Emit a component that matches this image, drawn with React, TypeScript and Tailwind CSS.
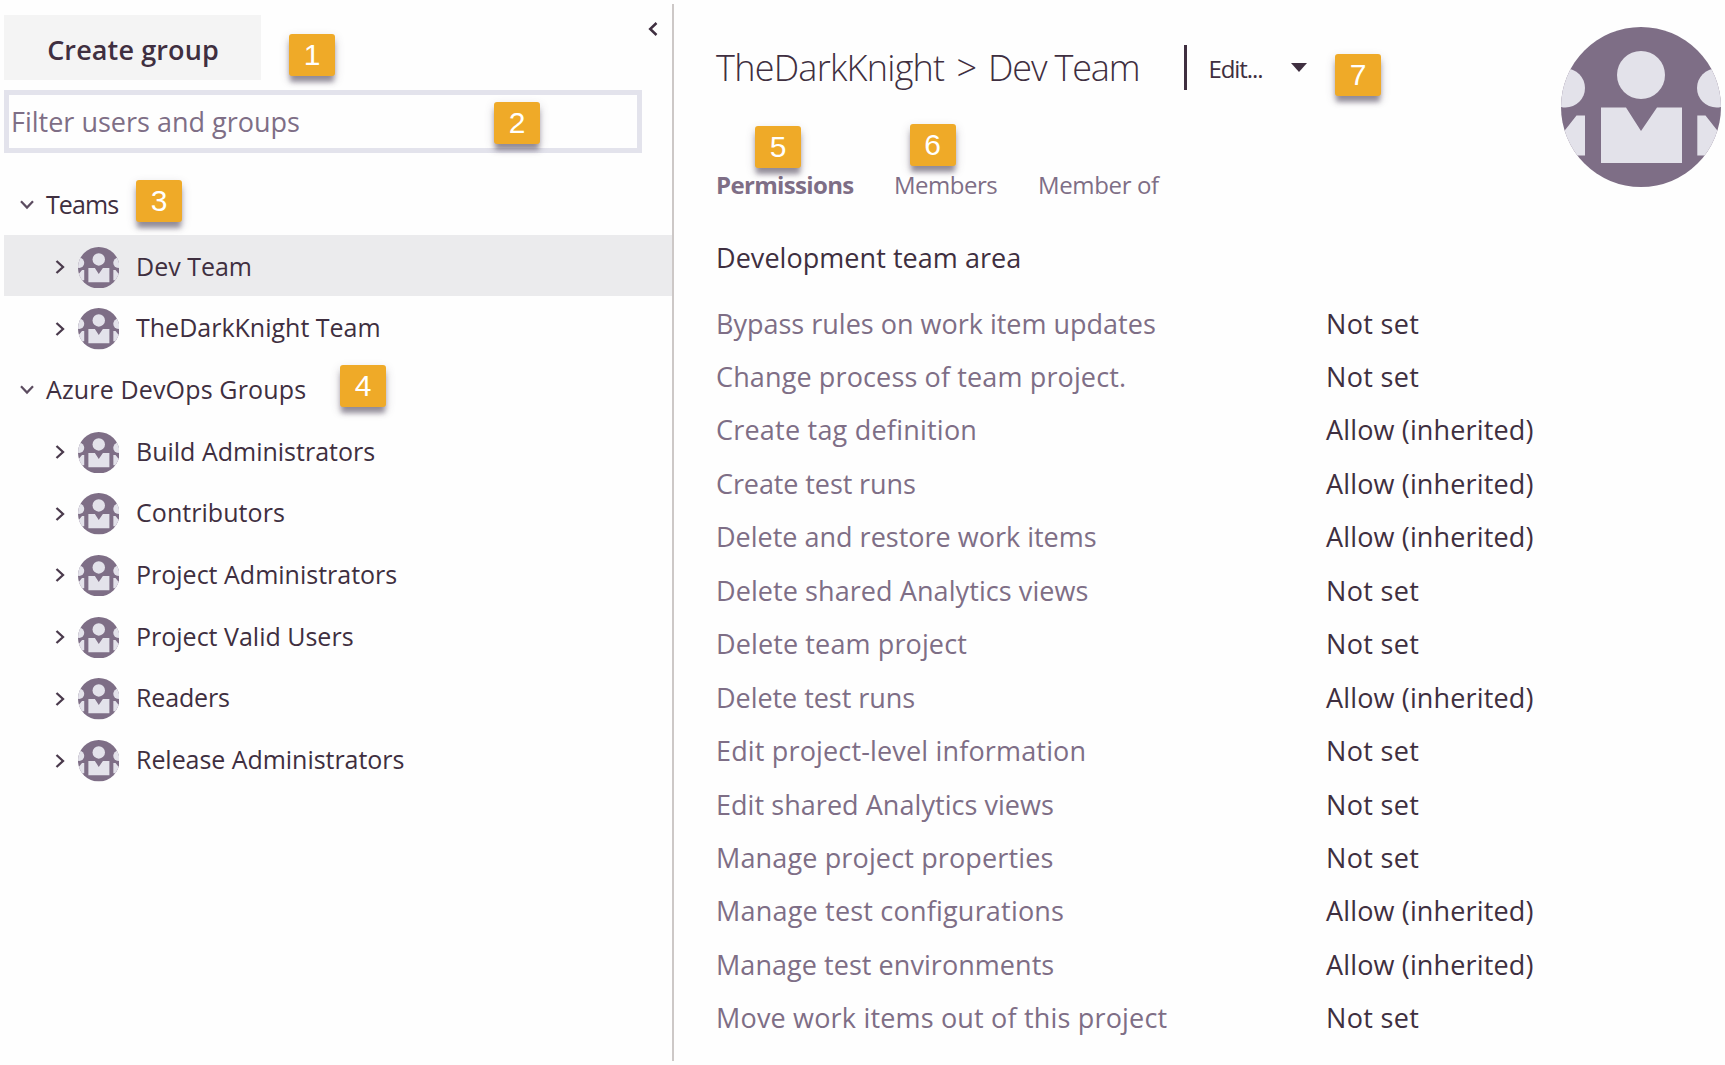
import React from "react";

const teams = [
  { name: "Dev Team", tracking: "", selected: true },
  { name: "TheDarkKnight Team", tracking: "", selected: false },
];

const groups = [
  { name: "Build Administrators", tracking: "" },
  { name: "Contributors", tracking: "tracking-[0.05px]" },
  { name: "Project Administrators", tracking: "" },
  { name: "Project Valid Users", tracking: "" },
  { name: "Readers", tracking: "tracking-[-0.15px]" },
  { name: "Release Administrators", tracking: "tracking-[-0.05px]" },
];

const permissions = [
  { name: "Bypass rules on work item updates", tracking: "", allow: false },
  { name: "Change process of team project.", tracking: "tracking-[0.13px]", allow: false },
  { name: "Create tag definition", tracking: "tracking-[0.22px]", allow: true },
  { name: "Create test runs", tracking: "tracking-[-0.1px]", allow: true },
  { name: "Delete and restore work items", tracking: "", allow: true },
  { name: "Delete shared Analytics views", tracking: "tracking-[0.08px]", allow: false },
  { name: "Delete team project", tracking: "tracking-[0.12px]", allow: false },
  { name: "Delete test runs", tracking: "tracking-[-0.05px]", allow: true },
  { name: "Edit project-level information", tracking: "tracking-[0.16px]", allow: false },
  { name: "Edit shared Analytics views", tracking: "tracking-[0.05px]", allow: false },
  { name: "Manage project properties", tracking: "tracking-[0.14px]", allow: false },
  { name: "Manage test configurations", tracking: "tracking-[0.2px]", allow: true },
  { name: "Manage test environments", tracking: "tracking-[0.05px]", allow: true },
  { name: "Move work items out of this project", tracking: "tracking-[0.18px]", allow: false },
];

function Avatar({ id, className }: { id: string; className: string }) {
  return (
    <svg viewBox="0 0 160 160" className={className} aria-hidden="true">
      <clipPath id={id}>
        <circle cx="80" cy="80" r="80" />
      </clipPath>
      <g clipPath={`url(#${id})`}>
        <rect width="160" height="160" fill="#7e6e86" />
        <g fill="#e3e2ea">
          <circle cx="80" cy="48" r="24" />
          <path d="M40 80.5H65L80 104L96 80.5H121V136H40Z" />
          <circle cx="4.5" cy="61" r="19.5" />
          <circle cx="155.5" cy="61" r="19.5" />
          <path d="M24 88.5H15.5L4.5 102.5L0 106V128.5H24Z" />
          <path d="M136.3 88.5H144.5L155.5 102.5L160 106V128.5H136.3Z" />
        </g>
      </g>
    </svg>
  );
}

function Badge({ n, className }: { n: number; className: string }) {
  return (
    <span
      className={`absolute flex h-[42px] w-[46px] items-center justify-center rounded-[3px] bg-[#efaa28] font-['Liberation_Sans',sans-serif] text-[30px] leading-none text-white shadow-[0_7px_5px_-1px_rgba(80,70,90,0.5),0_4px_10px_rgba(80,70,90,0.28)] ${className}`}
    >
      {n}
    </span>
  );
}

function SectionRow({ name, tracking }: { name: string; tracking: string }) {
  return (
    <div className="flex h-[61.7px] items-center">
      <svg viewBox="0 0 14 10" className="ml-4 mr-[12px] mt-[3px] h-[10px] w-[14px]" fill="none" stroke="#5c4c60" strokeWidth="2.2">
        <path d="M1 1.2L7 7.6L13 1.2" />
      </svg>
      <span className={`mt-[1.5px] ${tracking}`}>{name}</span>
    </div>
  );
}

function GroupRow({ name, tracking, selected = false }: { name: string; tracking: string; selected?: boolean }) {
  return (
    <div className={`flex h-[61.7px] items-center ${selected ? "bg-[#ebebed]" : ""}`}>
      <svg viewBox="0 0 10 14" className="ml-[51px] mr-[12.5px] mt-[3px] h-[14px] w-[10px]" fill="none" stroke="#4a3a4c" strokeWidth="2.3">
        <path d="M1.5 1L8 7L1.5 13" />
      </svg>
      <Avatar id={`avatar-${name.replace(/ /g, "-")}`} className="mt-[3.5px] h-[41.5px] w-[41.5px]" />
      <span className={`ml-[17px] mt-[1.5px] ${tracking}`}>{name}</span>
    </div>
  );
}

export default function App() {
  return (
    <div className="relative flex h-[1065px] w-[1725px] overflow-hidden whitespace-nowrap bg-[#fefefe] font-['Open_Sans',sans-serif] text-[#3f2f40]">
      <aside className="mt-1 h-[1057px] w-[674px] shrink-0 border-r-2 border-[#cdc8c7] pl-1">
        <div className="flex items-start justify-between pt-[11px]">
          <button className="flex h-[65px] w-[257px] items-center justify-center bg-[#f4f4f4] pl-px pt-[6px] text-[27px] font-semibold tracking-[0.12px]">
            Create group
          </button>
          <svg viewBox="0 0 10 14" className="mr-[14px] mt-[7px] h-[14px] w-[10px]" fill="none" stroke="#3f2f40" strokeWidth="2.5">
            <path d="M8.5 1L2.2 7L8.5 13" />
          </svg>
        </div>
        <div className="mt-[10px] flex h-[63px] w-[638px] items-center border-[5px] border-[#e3e3ec] pl-0.5 text-[27px] leading-[50px] text-[#7e6e86]">
          <span>Filter users and groups</span>
        </div>
        <nav className="mt-5 text-[25px]">
          <SectionRow name="Teams" tracking="tracking-[-0.9px]" />
          {teams.map((t) => (
            <GroupRow key={t.name} {...t} />
          ))}
          <SectionRow name="Azure DevOps Groups" tracking="tracking-[0.15px]" />
          {groups.map((g) => (
            <GroupRow key={g.name} {...g} />
          ))}
        </nav>
      </aside>

      <main className="flex-1 pl-[42px]">
        <header className="flex h-[231px] justify-between">
          <div>
            <div className="flex h-[132px] items-center text-[24px]">
              <h1 className="mt-[3px] flex w-[467.5px] text-[36px] font-light">
                <span className="w-[240.5px] tracking-[-0.75px]">TheDarkKnight</span>
                <span className="w-[31.5px]">&gt;</span>
                <span className="tracking-[-1.15px]">Dev Team</span>
              </h1>
              <div className="mt-[3px] h-[45px] w-[3px] bg-[#3f2f40]" />
              <span className="ml-[22px] mt-1.5 tracking-[-1.1px]">Edit...</span>
              <svg viewBox="0 0 16 9" className="ml-[29px] mt-[3px] h-[9px] w-4" fill="#3f2f40">
                <path d="M0 0H16L8 9Z" />
              </svg>
            </div>
            <div className="mt-[34px] flex h-9 items-center pt-px text-[24px] text-[#7e6e86]">
              <span className="w-[178px] font-bold tracking-[-0.65px]">Permissions</span>
              <span className="w-[144px] tracking-[-0.5px]">Members</span>
              <span className="tracking-[-0.35px]">Member of</span>
            </div>
          </div>
          <Avatar id="avatar-header" className="mr-[4.5px] mt-[26.5px] h-[160px] w-[160px]" />
        </header>
        <h2 className="h-[65.5px] text-[27px] leading-[53px] tracking-[0.05px]">Development team area</h2>
        <div className="text-[27px] leading-[53.46px]">
          {permissions.map((p) => (
            <div key={p.name} className="flex h-[53.46px]">
              <span className={`w-[610px] text-[#7e6e86] ${p.tracking}`}>{p.name}</span>
              {p.allow ? (
                <span className="tracking-[0.15px]">Allow (inherited)</span>
              ) : (
                <span className="tracking-[0.35px]">Not set</span>
              )}
            </div>
          ))}
        </div>
      </main>

      <Badge n={1} className="left-[289px] top-[34px]" />
      <Badge n={2} className="left-[494px] top-[102px]" />
      <Badge n={3} className="left-[136px] top-[180px]" />
      <Badge n={4} className="left-[340px] top-[365px]" />
      <Badge n={5} className="left-[755px] top-[126px]" />
      <Badge n={6} className="left-[909.5px] top-[124px]" />
      <Badge n={7} className="left-[1335px] top-[54px]" />
    </div>
  );
}
